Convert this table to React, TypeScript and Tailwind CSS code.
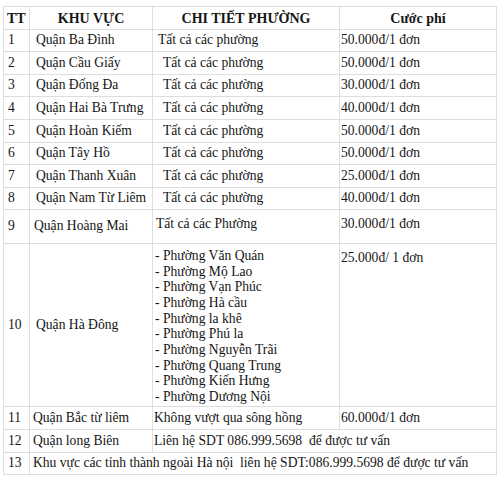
import type { ReactNode } from "react";

type Row = {
  tt: string;
  area: string;
  detail: ReactNode;
  price?: string;
  areaPad?: string;
  detailPad?: string;
  height: string;
  span?: "detail" | "all";
  top?: boolean;
};

const cell = "border border-[#dedede] align-middle";

const districts = [
  "Văn Quán",
  "Mộ Lao",
  "Vạn Phúc",
  "Hà cầu",
  "la khê",
  "Phú la",
  "Nguyễn Trãi",
  "Quang Trung",
  "Kiến Hưng",
  "Dương Nội"
];

const rows: Row[] = [
  { tt: "1", area: "Quận Ba Đình", detail: "Tất cả các phường", price: "50.000đ/1 đơn", detailPad: "pl-[5px]", height: "h-[22px]" },
  { tt: "2", area: "Quận Cầu Giấy", detail: "Tất cả các phường", price: "50.000đ/1 đơn", height: "h-[23px]" },
  { tt: "3", area: "Quận Đống Đa", detail: "Tất cả các phường", price: "30.000đ/1 đơn", height: "h-[22px]" },
  { tt: "4", area: "Quận Hai Bà Trưng", detail: "Tất cả các phường", price: "40.000đ/1 đơn", height: "h-[23px]" },
  { tt: "5", area: "Quận Hoàn Kiếm", detail: "Tất cả các phường", price: "50.000đ/1 đơn", height: "h-[23px]" },
  { tt: "6", area: "Quận Tây Hồ", detail: "Tất cả các phường", price: "50.000đ/1 đơn", height: "h-[22px]" },
  { tt: "7", area: "Quận Thanh Xuân", detail: "Tất cả các phường", price: "25.000đ/1 đơn", height: "h-[23px]" },
  { tt: "8", area: "Quận Nam Từ Liêm", detail: "Tất cả các phường", price: "40.000đ/1 đơn", height: "h-[22px]" },
  {
    tt: "9",
    area: "Quận Hoàng Mai",
    detail: "Tất cả các Phường",
    price: "30.000đ/1 đơn",
    areaPad: "pl-[4px]",
    detailPad: "pl-[3px]",
    height: "h-[34px]",
    top: true
  },
  {
    tt: "10",
    area: "Quận Hà Đông",
    detail: (
      <div className="leading-[15.65px]">
        {districts.map((d) => (
          <div key={d}>- Phường {d}</div>
        ))}
      </div>
    ),
    price: "25.000đ/ 1 đơn",
    areaPad: "pl-[6px]",
    detailPad: "pl-[2px]",
    height: "h-[163px]",
    top: true
  },
  { tt: "11", area: "Quận Bắc từ liêm", detail: "Không vượt qua sông hồng", price: "60.000đ/1 đơn", areaPad: "pl-[3px]", detailPad: "pl-[1px]", height: "h-[23px]" },
  { tt: "12", area: "Quận long Biên", detail: "Liên hệ SDT 086.999.5698  để được tư vấn", areaPad: "pl-[3px]", detailPad: "pl-[1px]", height: "h-[23px]", span: "detail" }
];

export default function App() {
  return (
    <div className="min-h-screen bg-white pl-[3px] pt-[6px] font-['Liberation_Serif','Times_New_Roman',serif] text-[13.6px] text-[#151515]">
      <table className="w-[493px] table-fixed border-collapse">
        <colgroup>
          <col className="w-[26px]" />
          <col className="w-[123px]" />
          <col className="w-[187px]" />
          <col className="w-[157px]" />
        </colgroup>
        <thead>
          <tr className="h-[23px] text-[14px] font-bold">
            <th className={cn(cell, "pl-[3px] text-left")}>TT</th>
            <th className={cell}>KHU VỰC</th>
            <th className={cell}>CHI TIẾT PHƯỜNG</th>
            <th className={cell}>Cước phí</th>
          </tr>
        </thead>
        <tbody>
          {rows.map((r) => (
            <tr key={r.tt} className={r.height}>
              <td className={cn(cell, "pl-[4px]")}>{r.tt}</td>
              <td className={cn(cell, r.areaPad ?? "pl-[6px]")}>{r.area}</td>
              {r.span === "detail" ? (
                <td colSpan={2} className={cn(cell, "whitespace-pre", r.detailPad)}>
                  {r.detail}
                </td>
              ) : (
                <>
                  <td className={cn(cell, r.top && "align-top pt-[4px]", r.detailPad ?? "pl-[10px]")}>{r.detail}</td>
                  <td className={cn(cell, r.top && "align-top pt-[4px]", "pl-[1px]")}>{r.price}</td>
                </>
              )}
            </tr>
          ))}
          <tr className="h-[22px]">
            <td className={cn(cell, "pl-[4px]")}>13</td>
            <td colSpan={3} className={cn(cell, "whitespace-pre pl-[3px]")}>
              Khu vực các tỉnh thành ngoài Hà nội  liên hệ SDT:086.999.5698 để được tư vấn
            </td>
          </tr>
        </tbody>
      </table>
    </div>
  );
}

function cn(...parts: (string | false | undefined)[]) {
  return parts.filter(Boolean).join(" ");
}
